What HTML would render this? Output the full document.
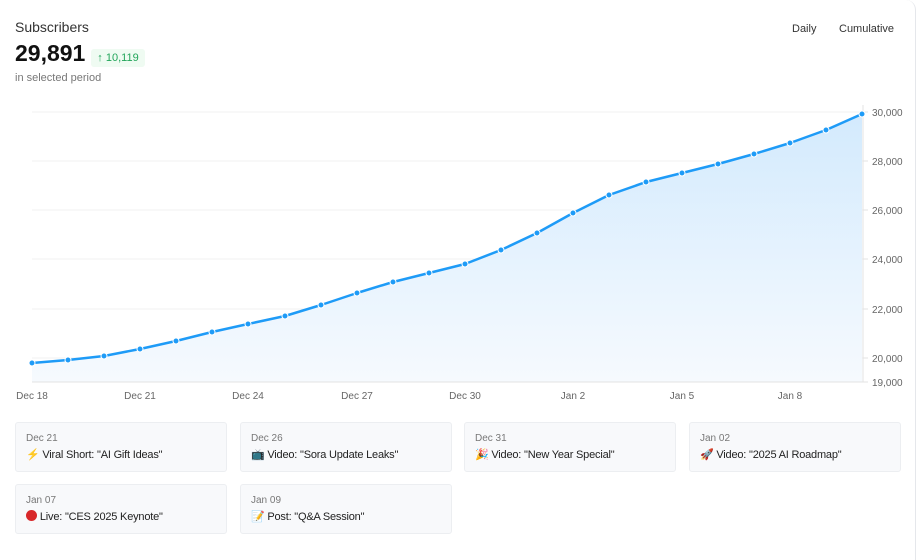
<!DOCTYPE html>
<html><head><meta charset="utf-8"><style>
body{margin:0;width:921px;height:545px;background:#fff;font-family:"Liberation Sans","Noto Sans CJK SC",sans-serif;position:relative;overflow:hidden}
.card{position:absolute;left:0;top:0;width:915px;height:560px;border-right:1px solid #e5e7eb;border-top-right-radius:10px}
.t{position:absolute;color:#222}
.ev{position:absolute;width:210px;height:48px;background:#f8f9fb;border:1px solid #eceef1;border-radius:3px}
.ev .d{position:absolute;left:10px;top:10px;font-size:10px;color:#777}
.ev .n{position:absolute;left:10px;top:25px;font-size:11px;color:#222;white-space:nowrap;letter-spacing:-0.2px}
</style></head><body>
<div class="card"></div>
<div class="t" style="left:15px;top:19px;font-size:14px;color:#333">Subscribers</div>
<div class="t" style="left:15px;top:40px;font-size:23px;font-weight:bold;color:#111">29,891</div>
<div class="t" style="left:91px;top:49px;width:54px;height:18px;background:#effbf2;border-radius:3px;color:#22a55a;font-size:11px;line-height:18px;text-align:center">↑ 10,119</div>
<div class="t" style="left:15px;top:72px;font-size:11px;color:#777">in selected period</div>
<div class="t" style="left:792px;top:23px;font-size:11px;color:#333">Daily</div>
<div class="t" style="left:839px;top:23px;font-size:11px;color:#333">Cumulative</div>
<svg style="position:absolute;left:0;top:0" width="921" height="410">
<defs><linearGradient id="g" x1="0" y1="0" x2="0" y2="1"><stop offset="0" stop-color="#d3eafd"/><stop offset="1" stop-color="#f6fafe"/></linearGradient></defs>
<g stroke="#f0f0f0" stroke-width="1">
<line x1="32" y1="112" x2="863" y2="112"/><line x1="32" y1="161" x2="863" y2="161"/><line x1="32" y1="210" x2="863" y2="210"/><line x1="32" y1="259" x2="863" y2="259"/><line x1="32" y1="309" x2="863" y2="309"/><line x1="32" y1="358" x2="863" y2="358"/>
</g>
<polygon fill="url(#g)" points="32,382 32,363 68,360 104,356 140,349 176,341 212,332 248,324 285,316 321,305 357,293 393,282 429,273 465,264 501,250 537,233 573,213 609,195 646,182 682,173 718,164 754,154 790,143 826,130 862,114 862,382"/>
<line x1="32" y1="382" x2="863" y2="382" stroke="#e3e3e3"/>
<line x1="863" y1="105" x2="863" y2="382" stroke="#e3e3e3"/>
<g stroke="#e3e3e3"><line x1="863" y1="112" x2="868" y2="112"/><line x1="863" y1="161" x2="868" y2="161"/><line x1="863" y1="210" x2="868" y2="210"/><line x1="863" y1="259" x2="868" y2="259"/><line x1="863" y1="309" x2="868" y2="309"/><line x1="863" y1="358" x2="868" y2="358"/><line x1="863" y1="382" x2="868" y2="382"/></g>
<polyline fill="none" stroke="#1e9bf7" stroke-width="2.5" stroke-linejoin="round" points="32,363 68,360 104,356 140,349 176,341 212,332 248,324 285,316 321,305 357,293 393,282 429,273 465,264 501,250 537,233 573,213 609,195 646,182 682,173 718,164 754,154 790,143 826,130 862,114"/>
<g fill="#1e9bf7" stroke="#fff" stroke-width="1">
<circle cx="32" cy="363" r="3"/><circle cx="68" cy="360" r="3"/><circle cx="104" cy="356" r="3"/><circle cx="140" cy="349" r="3"/><circle cx="176" cy="341" r="3"/><circle cx="212" cy="332" r="3"/><circle cx="248" cy="324" r="3"/><circle cx="285" cy="316" r="3"/><circle cx="321" cy="305" r="3"/><circle cx="357" cy="293" r="3"/><circle cx="393" cy="282" r="3"/><circle cx="429" cy="273" r="3"/><circle cx="465" cy="264" r="3"/><circle cx="501" cy="250" r="3"/><circle cx="537" cy="233" r="3"/><circle cx="573" cy="213" r="3"/><circle cx="609" cy="195" r="3"/><circle cx="646" cy="182" r="3"/><circle cx="682" cy="173" r="3"/><circle cx="718" cy="164" r="3"/><circle cx="754" cy="154" r="3"/><circle cx="790" cy="143" r="3"/><circle cx="826" cy="130" r="3"/><circle cx="862" cy="114" r="3"/>
</g>
<g font-family="Liberation Sans, sans-serif" font-size="10" fill="#666">
<text x="872" y="116">30,000</text><text x="872" y="165">28,000</text><text x="872" y="214">26,000</text><text x="872" y="263">24,000</text><text x="872" y="313">22,000</text><text x="872" y="362">20,000</text><text x="872" y="386">19,000</text>
<g text-anchor="middle"><text x="32" y="399">Dec 18</text><text x="140" y="399">Dec 21</text><text x="248" y="399">Dec 24</text><text x="357" y="399">Dec 27</text><text x="465" y="399">Dec 30</text><text x="573" y="399">Jan 2</text><text x="682" y="399">Jan 5</text><text x="790" y="399">Jan 8</text></g>
</g>
</svg>
<div class="ev" style="left:15px;top:422px"><div class="d">Dec 21</div><div class="n">⚡ Viral Short: "AI Gift Ideas"</div></div>
<div class="ev" style="left:240px;top:422px"><div class="d">Dec 26</div><div class="n">📺 Video: "Sora Update Leaks"</div></div>
<div class="ev" style="left:464px;top:422px"><div class="d">Dec 31</div><div class="n">🎉 Video: "New Year Special"</div></div>
<div class="ev" style="left:689px;top:422px"><div class="d">Jan 02</div><div class="n">🚀 Video: "2025 AI Roadmap"</div></div>
<div class="ev" style="left:15px;top:484px"><div class="d">Jan 07</div><div class="n"><span style="display:inline-block;width:11px;height:11px;border-radius:50%;background:#d8282a;vertical-align:-1px"></span> Live: "CES 2025 Keynote"</div></div>
<div class="ev" style="left:240px;top:484px"><div class="d">Jan 09</div><div class="n">📝 Post: "Q&amp;A Session"</div></div>
</body></html>
